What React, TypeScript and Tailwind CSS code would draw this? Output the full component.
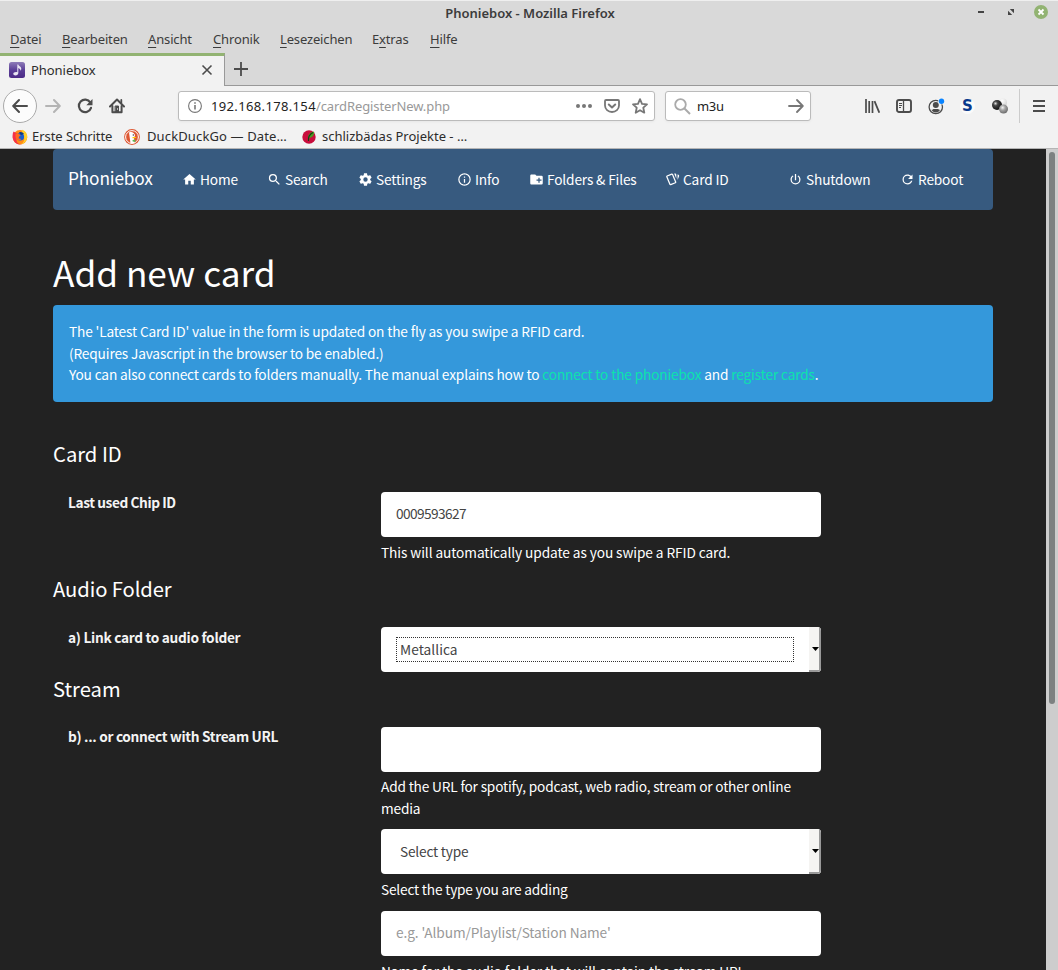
import React from "react";

const UI = "font-['Noto_Sans','Open_Sans',sans-serif]";

function Glyph({ d, className = "size-[15px]" }: { d: string; className?: string }) {
  return (
    <svg viewBox="0 0 24 24" className={`${className} shrink-0`} fill="currentColor" fillRule="evenodd">
      <path d={d} />
    </svg>
  );
}

const ICON = {
  home: "M10,20V14H14V20H19V12H22L12,3L2,12H5V20H10Z",
  search:
    "M9.5,3A6.5,6.5 0 0,1 16,9.5C16,11.11 15.41,12.59 14.44,13.73L14.71,14H15.5L20.5,19L19,20.5L14,15.5V14.71L13.73,14.44C12.59,15.41 11.11,16 9.5,16A6.5,6.5 0 0,1 3,9.5A6.5,6.5 0 0,1 9.5,3M9.5,5C7,5 5,7 5,9.5C5,12 7,14 9.5,14C12,14 14,12 14,9.5C14,7 12,5 9.5,5Z",
  settings:
    "M12,15.5A3.5,3.5 0 0,1 8.5,12A3.5,3.5 0 0,1 12,8.5A3.5,3.5 0 0,1 15.5,12A3.5,3.5 0 0,1 12,15.5M19.43,12.97C19.47,12.65 19.5,12.33 19.5,12C19.5,11.67 19.47,11.34 19.43,11L21.54,9.37C21.73,9.22 21.78,8.95 21.66,8.73L19.66,5.27C19.54,5.05 19.27,4.96 19.05,5.05L16.56,6.05C16.04,5.66 15.5,5.32 14.87,5.07L14.5,2.42C14.46,2.18 14.25,2 14,2H10C9.75,2 9.54,2.18 9.5,2.42L9.13,5.07C8.5,5.32 7.96,5.66 7.44,6.05L4.95,5.05C4.73,4.96 4.46,5.05 4.34,5.27L2.34,8.73C2.21,8.95 2.27,9.22 2.46,9.37L4.57,11C4.53,11.34 4.5,11.67 4.5,12C4.5,12.33 4.53,12.65 4.57,12.97L2.46,14.63C2.27,14.78 2.21,15.05 2.34,15.27L4.34,18.73C4.46,18.95 4.73,19.03 4.95,18.95L7.44,17.94C7.96,18.34 8.5,18.68 9.13,18.93L9.5,21.58C9.54,21.82 9.75,22 10,22H14C14.25,22 14.46,21.82 14.5,21.58L14.87,18.93C15.5,18.67 16.04,18.34 16.56,17.94L19.05,18.95C19.27,19.03 19.54,18.95 19.66,18.73L21.66,15.27C21.78,15.05 21.73,14.78 21.54,14.63L19.43,12.97Z",
  info: "M11,9H13V7H11M12,20C7.59,20 4,16.41 4,12C4,7.59 7.59,4 12,4C16.41,4 20,7.59 20,12C20,16.41 16.41,20 12,20M12,2A10,10 0 0,0 2,12A10,10 0 0,0 12,22A10,10 0 0,0 22,12A10,10 0 0,0 12,2M11,17H13V11H11V17Z",
  folder:
    "M10,4L12,6H20A2,2 0 0,1 22,8V18A2,2 0 0,1 20,20H4C2.89,20 2,19.1 2,18V6C2,4.89 2.89,4 4,4H10M15,9V12H12V14H15V17H17V14H20V12H17V9H15Z",
  cards:
    "M11.19,2.25C10.93,2.25 10.67,2.31 10.42,2.4L3.06,5.45C2.04,5.87 1.55,7.04 1.97,8.05L6.93,20C7.24,20.77 7.97,21.23 8.74,21.25C9,21.25 9.27,21.22 9.53,21.1L16.9,18.05C17.65,17.74 18.11,17 18.13,16.25C18.14,16 18.09,15.71 18,15.45L13,3.5C12.71,2.73 11.97,2.26 11.19,2.25M14.67,2.25L18.12,10.6V4.25A2,2 0 0,0 16.12,2.25M20.13,3.79V12.82L22.56,6.96C22.97,5.94 22.5,4.78 21.47,4.36M11.19,4.22L16.17,16.24L8.78,19.3L3.8,7.29",
  power:
    "M16.56,5.44L15.11,6.89C16.84,7.94 18,9.83 18,12A6,6 0 0,1 12,18A6,6 0 0,1 6,12C6,9.83 7.16,7.94 8.88,6.88L7.44,5.44C5.36,6.88 4,9.28 4,12A8,8 0 0,0 12,20A8,8 0 0,0 20,12C20,9.28 18.64,6.88 16.56,5.44M13,3H11V13H13",
  refresh:
    "M17.65,6.35C16.2,4.9 14.21,4 12,4A8,8 0 0,0 4,12A8,8 0 0,0 12,20C15.73,20 18.84,17.45 19.73,14H17.65C16.83,16.33 14.61,18 12,18A6,6 0 0,1 6,12A6,6 0 0,1 12,6C13.66,6 15.14,6.69 16.22,7.78L13,11H20V4L17.65,6.35Z",
};

function TitleBar() {
  return (
    <div className="flex h-[27px] items-center border-t border-[#efefef] pr-[10px]">
      <div className="w-[72px]" />
      <div className="flex-1 pl-[11px] text-center text-[13px] font-semibold tracking-[-0.01px] text-[#3c3c3c]">
        Phoniebox - Mozilla Firefox
      </div>
      <div className="flex w-[71px] items-center justify-between pb-[4px]">
        <svg width="8" height="10" viewBox="0 0 8 10"><path d="M1 4h6v2H1z" fill="#444" /></svg>
        <svg width="8" height="8" viewBox="0 0 8 8" fill="#444" className="ml-[2px]"><path d="M2.800 1H7v4.200zM1 2.800V7h4.200z" /></svg>
        <svg width="14" height="14" viewBox="0 0 14 14">
          <circle cx="7" cy="7" r="7" fill="#92b372" />
          <path d="M4.500 4.500l5 5m0-5l-5 5" stroke="#fff" strokeWidth="1.800" />
        </svg>
      </div>
    </div>
  );
}

function MenuItem({ pre = "", k, rest, className }: { pre?: string; k: string; rest: string; className: string }) {
  return (
    <span className={`${className} shrink-0 whitespace-nowrap`}>
      {pre}
      <span className="underline underline-offset-[3px]">{k}</span>
      {rest}
    </span>
  );
}

function MenuBar() {
  return (
    <div className="flex h-[26px] items-center pl-[10px] text-[13px] tracking-[-0.15px] text-[#3c3c3c]">
      <MenuItem k="D" rest="atei" className="w-[52px]" />
      <MenuItem k="B" rest="earbeiten" className="w-[86px]" />
      <MenuItem k="A" rest="nsicht" className="w-[65px]" />
      <MenuItem k="C" rest="hronik" className="w-[67px]" />
      <MenuItem k="L" rest="esezeichen" className="w-[92px]" />
      <MenuItem pre="E" k="x" rest="tras" className="w-[58px]" />
      <MenuItem k="H" rest="ilfe" className="w-[40px]" />
    </div>
  );
}

function TabStrip() {
  return (
    <div className="flex h-[33px]">
      <div className="flex w-[225px] items-center border-t-[3px] border-r border-t-[#92b372] border-r-[#999] bg-[#f2f2f2] pl-[9px]">
        <svg width="16" height="16" viewBox="0 0 16 16" className="mr-[6px] mb-[2px]">
          <defs>
            <linearGradient id="note" x1="0" y1="0" x2="0" y2="1">
              <stop offset="0" stopColor="#8e7cb8" />
              <stop offset="0.5" stopColor="#5b3f97" />
              <stop offset="1" stopColor="#4b2a86" />
            </linearGradient>
          </defs>
          <rect width="16" height="16" rx="2.500" fill="url(#note)" />
          <path d="M8.300 2.500h1c.2 1.600 3 2 3 4.200 0 .9-.4 1.600-.8 2 .1-1.400-1-2.200-2.200-2.600v4.900c0 1.400-1.300 2.400-2.800 2.400-1.200 0-2.200-.6-2.200-1.600 0-1.300 2-2.200 4-1.600z" fill="#e9e4f2" />
        </svg>
        <span className="w-[170px] text-[13px] tracking-[-0.050px] text-[#2c2c2c]">Phoniebox</span>
        <svg width="12" height="12" viewBox="0 0 12 12" className="mb-[2px]"><path d="M1.500 1.500l9 9m0-9l-9 9" stroke="#4c4c4c" strokeWidth="1.600" /></svg>
      </div>
      <div className="flex flex-1 items-center border-b border-[#999] pl-[8px]">
        <svg width="16" height="16" viewBox="0 0 16 16"><path d="M8 1v14M1 8h14" stroke="#4c4c4c" strokeWidth="1.800" /></svg>
      </div>
    </div>
  );
}

function NavigationBar() {
  return (
    <div className="flex h-[40px] items-center text-[#4c4c4c]">
      <div className="ml-[3px] flex size-[34px] items-center justify-center rounded-full border border-[#aaa] bg-[#fcfcfc]">
        <svg width="16" height="16" viewBox="0 0 16 16" fill="none" stroke="#4c4c4c" strokeWidth="2" strokeLinecap="round" strokeLinejoin="round">
          <path d="M15 8H1.500M7 2L1.200 8 7 14" />
        </svg>
      </div>
      <svg width="16" height="16" viewBox="0 0 16 16" className="ml-[8px]" fill="none" stroke="#b4b4b4" strokeWidth="2" strokeLinecap="round" strokeLinejoin="round">
        <path d="M1 8h13.500M9 2l5.800 6L9 14" />
      </svg>
      <svg width="16" height="16" viewBox="0 0 16 16" className="ml-[16px]">
        <path d="M13.300 4.500A6.200 6.200 0 1 0 14 9.800" fill="none" stroke="#4c4c4c" strokeWidth="2.200" strokeLinecap="round" />
        <path d="M15.500 1v6.200h-6.200z" fill="#4c4c4c" />
      </svg>
      <svg width="16" height="16" viewBox="0 0 16 16" className="ml-[16px]" fill="none" stroke="#4c4c4c" strokeLinecap="round" strokeLinejoin="round">
        <path d="M1 8.500L8 1.500l7 7" strokeWidth="2" />
        <path d="M12.300 2v3" strokeWidth="1.800" />
        <path d="M3.400 8v6.300h9.200V8" strokeWidth="2" />
        <path d="M6.500 8h3v6h-3z" fill="#4c4c4c" strokeWidth="1" />
        <path d="M8.500 10.500v1" stroke="#ddd" strokeWidth="0.800" />
      </svg>

      <div className="ml-[53px] flex h-[30px] w-[477px] items-center rounded-[3px] border border-[#bbb] bg-white pl-[9px] shadow-[0_1px_3px_rgba(0,0,0,0.05)]">
        <svg width="14" height="14" viewBox="0 0 14 14">
          <circle cx="7" cy="7" r="6.400" fill="none" stroke="#777" strokeWidth="1.100" />
          <path d="M6.200 6h1.600v4.500H6.200zM6.200 3.200h1.600v1.600H6.200z" fill="#777" />
        </svg>
        <span className="ml-[9px] w-[365px] whitespace-nowrap pt-px text-[13px] text-[#999]">
          <span className="tracking-[0.350px] text-[#222]">192.168.178.154</span>
          <span className="tracking-[-0.100px]">/cardRegisterNew.php</span>
        </span>
        <svg width="16" height="16" viewBox="0 0 16 16" fill="#777"><circle cx="2" cy="8" r="2" /><circle cx="8" cy="8" r="2" /><circle cx="14" cy="8" r="2" /></svg>
        <svg width="16" height="16" viewBox="0 0 16 16" className="ml-[12px]" fill="none" stroke="#777" strokeLinecap="round" strokeLinejoin="round">
          <path d="M2 2h12a1 1 0 0 1 1 1v4.500a7 6.500 0 0 1-14 0V3a1 1 0 0 1 1-1z" strokeWidth="1.800" />
          <path d="M4.800 6.500L8 9.500l3.200-3" strokeWidth="2" />
        </svg>
        <svg width="16" height="16" viewBox="0 0 16 16" className="ml-[12px]" fill="none" stroke="#777" strokeWidth="1.800" strokeLinejoin="round">
          <path d="M8 1.200l2 4.600 5 .5-3.700 3.400 1 5L8 12.200l-4.300 2.500 1-5L1 6.300l5-.5z" />
        </svg>
      </div>

      <div className="ml-[10px] flex h-[30px] w-[146px] items-center rounded-[3px] border border-[#bbb] bg-white pl-[8px] shadow-[0_1px_3px_rgba(0,0,0,0.05)]">
        <svg width="17" height="17" viewBox="0 0 17 17" fill="none" stroke="#aaa">
          <circle cx="6.500" cy="6.500" r="5.300" strokeWidth="1.800" />
          <path d="M10.500 10.500L16 16" strokeWidth="2" />
        </svg>
        <span className="ml-[6px] w-[91px] pt-px text-[13px] tracking-[-0.300px] text-[#222]">m3u</span>
        <svg width="16" height="16" viewBox="0 0 16 16" fill="none" stroke="#777" strokeWidth="1.800" strokeLinecap="round" strokeLinejoin="round">
          <path d="M1 8h13.500M9 2l5.800 6L9 14" />
        </svg>
      </div>

      <svg width="16" height="16" viewBox="0 0 16 16" className="ml-[53px]" fill="none" stroke="#4c4c4c">
        <path d="M2 1v14M5.200 3v12M8.500 3v12" strokeWidth="1.700" />
        <path d="M10.500 3.200l4.800 11.500" strokeWidth="1.800" />
      </svg>
      <svg width="16" height="16" viewBox="0 0 16 16" className="ml-[16px]" fill="none" stroke="#4c4c4c">
        <rect x="1" y="2" width="14" height="12" rx="2" strokeWidth="1.900" />
        <path d="M7.500 2v12" strokeWidth="1.300" />
        <path d="M3 5.500h3M3 7.500h3M3 9.500h2" strokeWidth="1" />
      </svg>
      <svg width="17" height="17" viewBox="0 0 17 17" className="ml-[16px]">
        <circle cx="7.800" cy="9" r="6.700" fill="none" stroke="#4c4c4c" strokeWidth="1.300" />
        <circle cx="7.800" cy="7" r="3" fill="#4c4c4c" />
        <path d="M3.300 11.500c1 .6 1.800-.6 2.500-.6h4c.7 0 1.500 1.200 2.500.6-1 2-2.500 3-4.500 3s-3.500-1-4.500-3z" fill="#4c4c4c" />
        <circle cx="13.500" cy="3.200" r="3.400" fill="#f2f2f2" />
        <circle cx="13.500" cy="3.200" r="2.700" fill="#0a84ff" />
      </svg>
      <span className="ml-[15px] flex size-[15px] items-center justify-center rounded-full bg-[#fafafa] pt-px font-['DejaVu_Sans',sans-serif] text-[15px] font-bold text-[#0a3a8c]">S</span>
      <svg width="18" height="16" viewBox="0 0 18 16" className="ml-[16px]">
        <defs>
          <radialGradient id="dark" cx="0.350" cy="0.350" r="0.650"><stop offset="0" stopColor="#ddd" /><stop offset="0.350" stopColor="#444" /><stop offset="1" stopColor="#111" /></radialGradient>
          <radialGradient id="grey" cx="0.400" cy="0.350" r="0.700"><stop offset="0" stopColor="#f4f4f4" /><stop offset="0.400" stopColor="#a5a5a5" /><stop offset="1" stopColor="#666" /></radialGradient>
          <radialGradient id="pale" cx="0.400" cy="0.300" r="0.700"><stop offset="0" stopColor="#fff" /><stop offset="1" stopColor="#d4d4d4" /></radialGradient>
        </defs>
        <circle cx="12" cy="4.500" r="4" fill="url(#pale)" />
        <circle cx="6" cy="7" r="5" fill="url(#dark)" />
        <circle cx="12.500" cy="11" r="4.500" fill="url(#grey)" />
      </svg>
      <div className="ml-[10px] h-[34px] w-px bg-[#ccc]" />
      <svg width="12" height="12" viewBox="0 0 12 12" className="ml-[13px]"><path d="M0 1h12M0 6h12M0 11h12" stroke="#4c4c4c" strokeWidth="2" /></svg>
    </div>
  );
}

function Bookmarks() {
  return (
    <div className="flex h-[22px] items-center pb-px pl-[12px] text-[13px] whitespace-nowrap text-[#2c2c2c]">
      <svg width="16" height="16" viewBox="0 0 16 16" className="mr-[4px]">
        <circle cx="8" cy="8.300" r="7.200" fill="#ff8a16" />
        <path d="M10 .8c4 1.200 5.800 4.700 5.100 8.200-.5 3-3 5.500-6.200 6.300 3-2 4-4.500 3-7.600-.5-1.800-2.400-3-1.900-6.900z" fill="#ffd02a" />
        <path d="M1.500 2.500C.3 5 .2 9 1.600 11.500c1.700 3 5 4.500 8.400 3.700-4 0-5.500-2-5.500-4.500L6 5z" fill="#f5314b" />
        <circle cx="8.300" cy="7.700" r="3.800" fill="#1b5fc9" />
        <path d="M3.500 4.500l3.500.6 1.700 1.400-1.800 1.200-.2 1.800 2.800.5c-1.500 2-5.300 1.500-6-2z" fill="#ff6a1c" />
        <path d="M7 3.500c1.500-1 4-.4 5 1.500l-3 1z" fill="#0c3b85" />
      </svg>
      <span className="w-[92px] tracking-[-0.050px]">Erste Schritte</span>
      <svg width="16" height="16" viewBox="0 0 16 16" className="mr-[7px]">
        <circle cx="8" cy="8" r="7.900" fill="#de5833" />
        <circle cx="8" cy="8" r="6.400" fill="#de5833" stroke="#fff" strokeWidth="1" />
        <path d="M5 3.500c2.500-1.300 5.500 0 6 3l-1 2.500.7 5c-1.200.6-3 .6-4.200.2z" fill="#fff" />
        <path d="M8.500 8l4 .1c0 1-2 1.200-4 1.200z" fill="#fdd20a" />
        <path d="M8.500 11l2.500-.5.500 2.500-2.800-.4z" fill="#5ab552" />
        <circle cx="9.300" cy="6" r=".7" fill="#334" />
      </svg>
      <span className="w-[155px] tracking-[0.130px]">DuckDuckGo — Date…</span>
      <svg width="14" height="14" viewBox="0 0 14 14" className="mr-[6px]">
        <circle cx="7" cy="7" r="6.700" fill="#c80d3c" />
        <path d="M6.500 9C5.500 5 7.500 2.500 12 1.500c.5 3-1 6-5 6.500z" fill="#4a9a22" />
        <path d="M6.500 11C6 7 8 4 11 2.500" stroke="#183d10" strokeWidth="1.100" fill="none" />
      </svg>
      <span>schlizbädas Projekte - …</span>
    </div>
  );
}

function NavLink({ icon, label, className }: { icon: string; label: string; className: string }) {
  return (
    <a className={`flex shrink-0 items-center whitespace-nowrap ${className}`}>
      <Glyph d={icon} className="mr-[3px] size-[15px]" />
      {label}
    </a>
  );
}

function SelectBox({ value, focused = false }: { value: string; focused?: boolean }) {
  return (
    <div className="flex h-[45px] w-[440px] overflow-hidden rounded-[4px] bg-white text-[#444]">
      <div className="flex flex-1 items-center pl-[15px]">
        <div className={`flex h-[25px] w-[398px] items-center pl-[3px] ${focused ? "border border-dotted border-[#333] tracking-[0.050px]" : "border border-transparent tracking-[-0.200px]"}`}>{value}</div>
      </div>
      <div className="flex w-[12px] items-center justify-end border-r-2 border-b-2 border-[#999] bg-[#f5f4f2]">
        <svg width="7" height="4" viewBox="0 0 7 4"><path d="M0 0h7L3.500 4z" fill="#000" /></svg>
      </div>
    </div>
  );
}

function Row({ label, labelClass = "tracking-[-0.330px]", children }: { label: string; labelClass?: string; children: React.ReactNode }) {
  return (
    <div className="flex pl-[15px]">
      <div className={`w-[313px] shrink-0 font-bold text-[#f4f4f4] ${labelClass}`}>{label}</div>
      <div className="w-[440px]">{children}</div>
    </div>
  );
}

export default function App() {
  return (
    <div className="flex h-[970px] w-[1058px] flex-col overflow-hidden bg-[#222]">
      <header className={`h-[149px] shrink-0 border-b border-[#b5b5b5] bg-[#f2f2f2] ${UI}`}>
        <div className="h-[86px] bg-[#d9d9d9]">
          <TitleBar />
          <MenuBar />
          <TabStrip />
        </div>
        <NavigationBar />
        <Bookmarks />
      </header>

      <div className="flex min-h-0 flex-1">
        <main className="flex-1 overflow-hidden pl-[53px] font-['Noto_Sans_CJK_SC',sans-serif] text-[13.700px] leading-[21.500px] tracking-[-0.155px] text-white">
          <nav className="flex h-[61px] w-[940px] items-center rounded-[4px] bg-[#375a7f] pl-[15px]">
            <span className="w-[114px] pb-[3px] text-[17.300px]">Phoniebox</span>
            <NavLink icon={ICON.home} label="Home" className="w-[85px]" />
            <NavLink icon={ICON.search} label="Search" className="w-[91px]" />
            <NavLink icon={ICON.settings} label="Settings" className="w-[99px]" />
            <NavLink icon={ICON.info} label="Info" className="w-[72px]" />
            <NavLink icon={ICON.folder} label="Folders & Files" className="w-[136px]" />
            <NavLink icon={ICON.cards} label="Card ID" className="w-[123px]" />
            <NavLink icon={ICON.power} label="Shutdown" className="w-[112px]" />
            <NavLink icon={ICON.refresh} label="Reboot" className="w-[64px]" />
          </nav>

          <h1 className="mt-[40px] mb-[12px] h-[43px] text-[35.200px] leading-[43px] tracking-normal">Add new card</h1>

          <div className="h-[97px] w-[940px] rounded-[4px] bg-[#3498db] px-[16px] pt-[16px]">
            <p>The 'Latest Card ID' value in the form is updated on the fly as you swipe a RFID card.</p>
            <p>(Requires Javascript in the browser to be enabled.)</p>
            <p>
              You can also connect cards to folders manually. The manual explains how to{" "}
              <a className="text-[#0ce3ac]">connect to the phoniebox</a> and <a className="text-[#0ce3ac]">register cards</a>.
            </p>
          </div>

          <h2 className="mt-[37px] h-[53px] text-[20.200px] leading-[30px] tracking-normal">Card ID</h2>
          <Row label="Last used Chip ID" labelClass="tracking-[-0.420px]">
            <div className="flex h-[45px] items-center rounded-[4px] bg-white pb-[2px] pl-[15px] tracking-[-0.590px] text-[#444]">0009593627</div>
            <p className="pt-[5px] tracking-[-0.090px]">This will automatically update as you swipe a RFID card.</p>
          </Row>

          <h2 className="mt-[10.500px] h-[53px] text-[20.200px] leading-[30px] tracking-[-0.080px]">Audio Folder</h2>
          <Row label="a) Link card to audio folder" labelClass="tracking-[-0.300px]">
            <SelectBox value="Metallica" focused />
          </Row>

          <h2 className="mt-[2px] h-[53px] text-[20.200px] leading-[30px] tracking-normal">Stream</h2>
          <Row label="b) ... or connect with Stream URL" labelClass="-mt-px tracking-[-0.330px]">
            <div className="h-[45px] rounded-[4px] bg-white" />
            <p className="pt-[4px] pb-[10px] tracking-[-0.180px]">Add the URL for spotify, podcast, web radio, stream or other online media</p>
            <SelectBox value="Select type" />
            <p className="h-[37px] pt-[5px] tracking-[-0.200px]">Select the type you are adding</p>
            <div className="flex h-[45px] items-center rounded-[4px] bg-white pb-[2px] pl-[15px] tracking-[-0.100px] text-[#999]">e.g. 'Album/Playlist/Station Name'</div>
            <p className="pt-[5px] tracking-[-0.100px]">Name for the audio folder that will contain the stream URL</p>
          </Row>
        </main>
        <div className="flex w-[12px] justify-center bg-[#cdcdcd] pt-[3px]">
          <div className="h-[552px] w-[6px] rounded-full bg-[#7d8181]" />
        </div>
      </div>
    </div>
  );
}
